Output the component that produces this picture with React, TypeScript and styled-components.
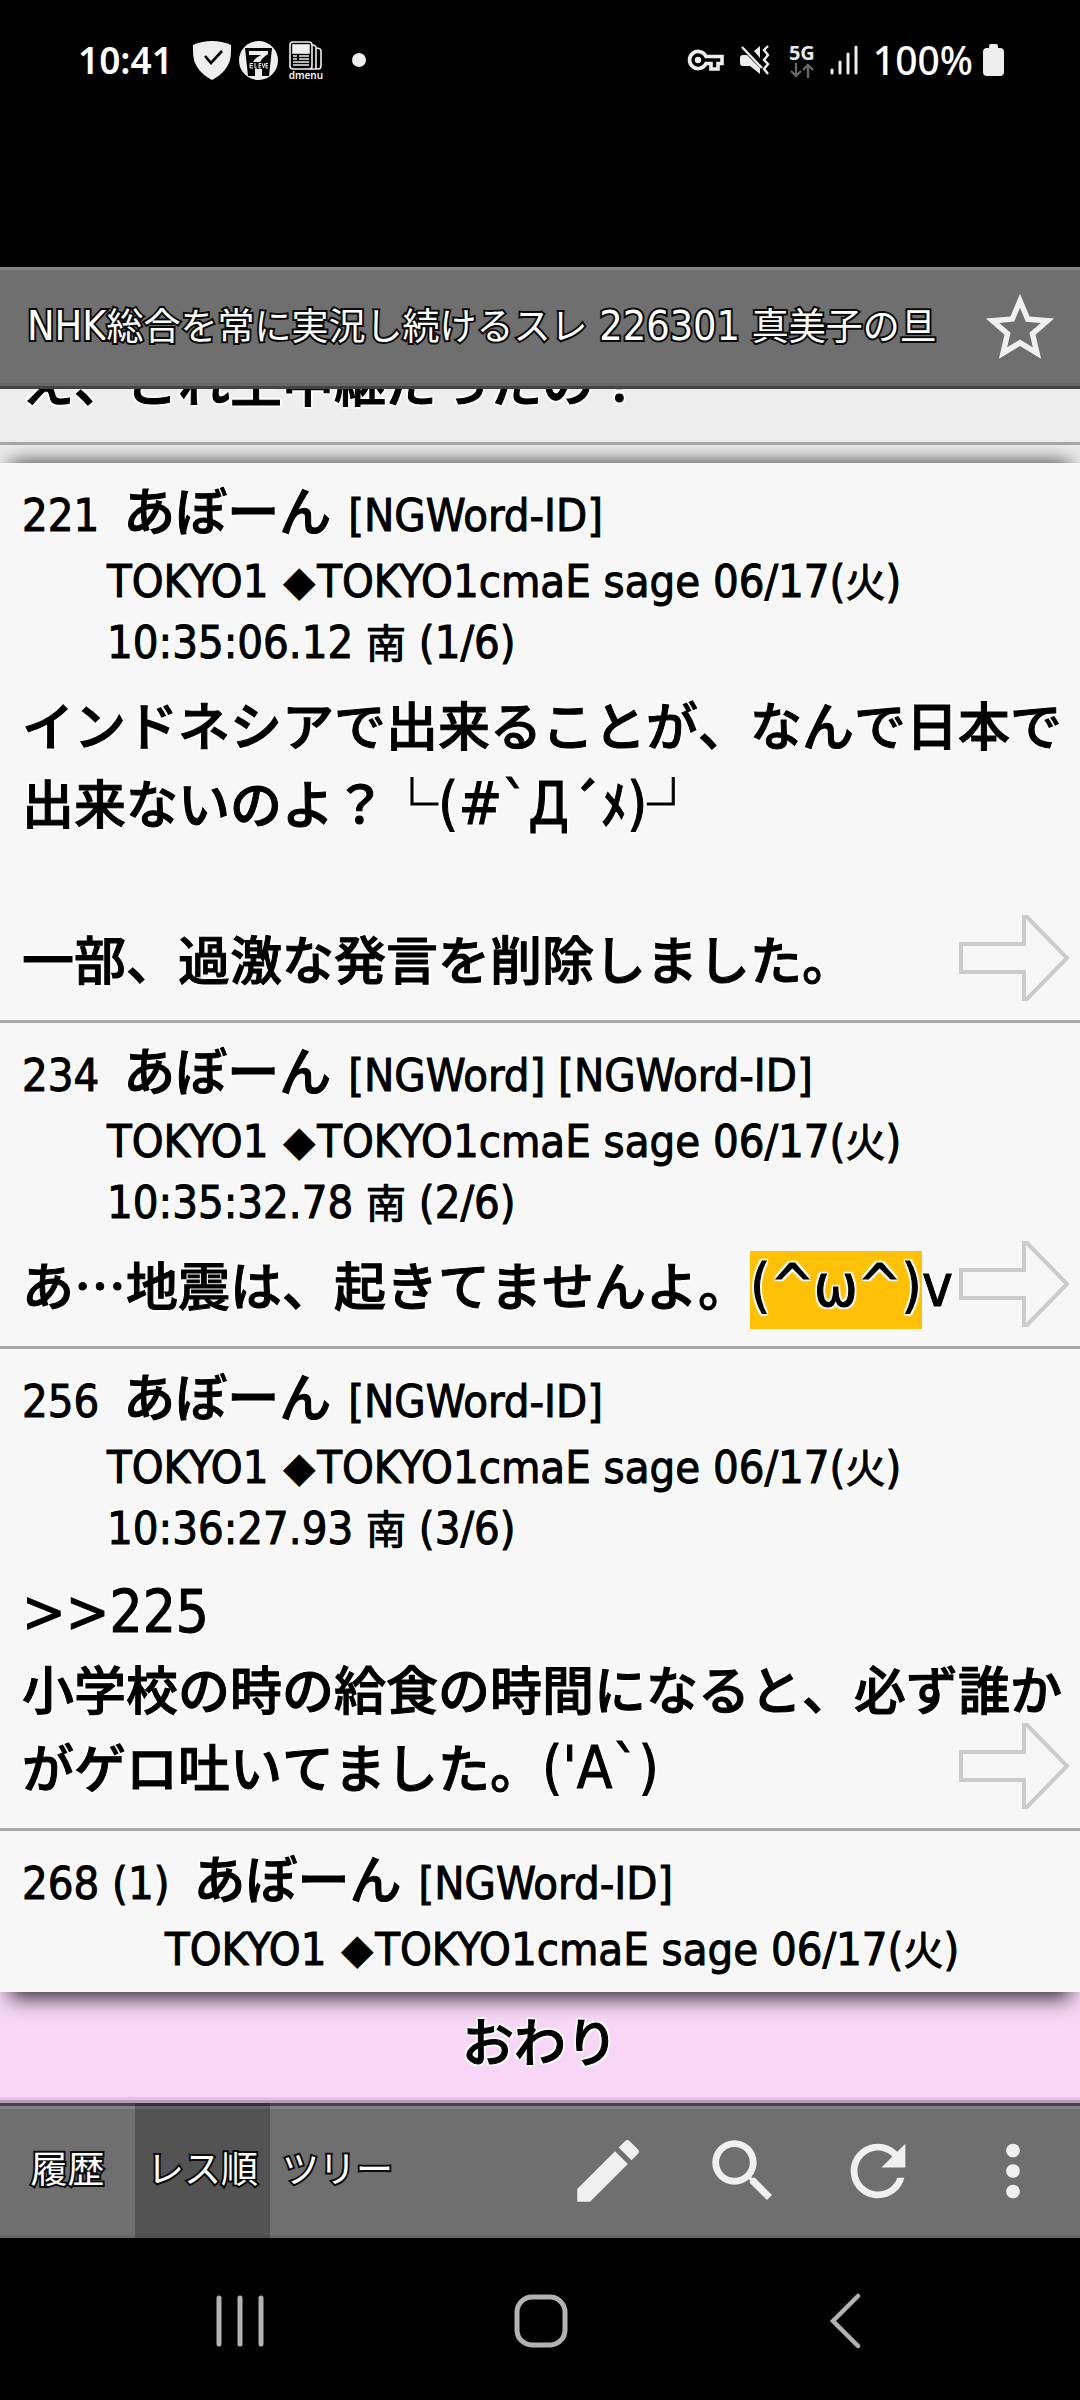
import React from 'react';
import styled, { createGlobalStyle } from 'styled-components';

const JP = '"Noto Sans CJK JP", sans-serif';
const LATIN = '"DejaVu Sans Condensed", "DejaVu Sans", "Noto Sans CJK JP", sans-serif';
const SYSTEM = '"Noto Sans", Roboto, sans-serif';

const GlobalStyle = createGlobalStyle`
  *, *::before, *::after { box-sizing: border-box; }
  body { margin: 0; background: #000; }
  button { border: 0; padding: 0; margin: 0; background: none; color: inherit; font: inherit; }
  h1, h2, p, ol { margin: 0; padding: 0; font-weight: inherit; }
  ol { list-style: none; }
  svg { display: block; flex: none; }
`;

const Screen = styled.div`
  min-height: 100vh;
  display: flex;
  flex-direction: column;
  background: #000;
  font-family: ${JP};
`;

/* ---------- status bar ---------- */

const StatusBar = styled.div`
  height: 267px;
  padding: 32px 76px 0 78px;
  display: flex;
  align-items: flex-start;
  justify-content: space-between;
  color: #fff;
  font-family: ${SYSTEM};
`;

const StatusGroup = styled.div<{ $gap: number }>`
  height: 56px;
  display: flex;
  align-items: center;
  gap: ${(p) => p.$gap}px;
`;

const StatusText = styled.span`
  font-size: 37px;
  line-height: 56px;
  font-weight: 600;
`;

const Charge = styled(StatusText)`
  font-size: 39px;
  font-weight: 500;
`;

const StatusIcons = styled.div`
  display: flex;
  align-items: center;
  gap: 8px;
  margin-left: 8px;
`;

const MenuApp = styled.div`
  width: 40px;
  display: flex;
  flex-direction: column;
  align-items: center;
  font-size: 10px;
  line-height: 10px;
  font-weight: 600;
  color: #f0f0f0;
`;

const Dot = styled.span`
  width: 14px;
  height: 14px;
  margin-left: 18px;
  border-radius: 50%;
  background: #eee;
`;

const Network = styled.div`
  display: flex;
  flex-direction: column;
  align-items: center;
  font-size: 20px;
  line-height: 20px;
  font-weight: 700;
  color: #e8e8e8;
`;

/* ---------- thread header ---------- */

const Header = styled.header`
  height: 122px;
  display: flex;
  align-items: center;
  background: #6f6f6f;
  border-top: 3px solid #828282;
  border-bottom: 3px solid #434343;
  box-shadow: inset 0 -3px 0 #686868;
`;

const outlined = `
  color: #fff;
  -webkit-text-stroke: 4px #0c0c0c;
  paint-order: stroke fill;
`;

const halo = [
  [-2, 0], [2, 0], [0, -2], [0, 2], [-2, -2], [2, -2], [-2, 2], [2, 2],
]
  .map(([x, y]) => `${x}px ${y}px 1px #fcfcfc`)
  .join(', ');

const Title = styled.h1`
  flex: 1;
  padding: 0 0 8px 27px;
  font-size: 37px;
  line-height: 56px;
  white-space: nowrap;
  ${outlined}
`;

const StarButton = styled.button`
  width: 120px;
  height: 116px;
  display: flex;
  align-items: center;
  justify-content: center;
`;

/* ---------- posts ---------- */

const Main = styled.main`
  flex: 1;
  display: flex;
  flex-direction: column;
  background: #eee;
  color: #000;
  text-shadow: ${halo};
  -webkit-text-stroke: 1px #000;
`;

const PreviousPost = styled.div`
  height: 56px;
  padding: 0 12px 23px 22px;
  border-bottom: 3px solid #a8a8a8;
`;

const PreviousClip = styled.div`
  height: 30px;
  display: flex;
  align-items: flex-end;
  overflow: hidden;
`;

const BodyText = styled.p`
  font-size: 52px;
  line-height: 78px;
  font-weight: 500;
  font-kerning: none;
`;

const Popup = styled.section`
  flex: 1;
  position: relative;
  margin-top: 18px;
  background: #f7f7f7;
  box-shadow:
    0 -10px 20px -10px rgba(0, 0, 0, 0.8),
    0 16px 20px -10px rgba(0, 0, 0, 0.8);
`;

const Post = styled.li`
  position: relative;
  padding: 11px 12px 23px 22px;
  border-bottom: 3px solid #a8a8a8;

  &:last-child {
    border-bottom: 0;
    padding-bottom: 0;
  }
`;

const PostHead = styled.div`
  min-height: 211px;
  font-size: 40px;
  line-height: 61px;
`;

const ShortHead = styled(PostHead)`
  min-height: 0;
`;

const PostTitle = styled.div`
  display: flex;
  align-items: baseline;
  padding-bottom: 6px;
  line-height: 70px;
`;

const PostName = styled.h2`
  margin: 0 17px 0 24px;
  font-size: 52px;
  font-weight: 500;
`;

const PostMeta = styled.div<{ $indent: number }>`
  padding-left: ${(p) => p.$indent}px;
`;

const LatinRun = styled.span<{ $size: number }>`
  font-family: ${LATIN};
  font-size: ${(p) => p.$size}px;
  font-weight: 400;
  line-height: 1;
`;

const Diamond = styled.span`
  margin: 0 2px;
  font-size: 32px;
  line-height: 1;
`;

const Highlight = styled.mark`
  display: inline-block;
  margin-bottom: -6px;
  padding-bottom: 12px;
  line-height: 66px;
  background: #ffc107;
  color: inherit;
`;

const ArrowButton = styled.button`
  position: absolute;
  right: 10px;
  bottom: 18px;
`;

const EndBar = styled.div`
  padding: 9px 0 21px;
  text-align: center;
  background: #f7d7f5;
  border-bottom: 3px solid #b99ab8;
  box-shadow: inset 0 -3px 0 #e4c0e2;
`;

/* ---------- toolbars ---------- */

const Toolbar = styled.nav`
  height: 135px;
  display: grid;
  grid-template-columns: repeat(8, 1fr);
  background: linear-gradient(
    #474147 0 3px,
    #828282 3px 6px,
    #6f6f6f 6px 132px,
    #686868 132px
  );
`;

const ToolButton = styled.button<{ $column?: number }>`
  display: flex;
  align-items: center;
  justify-content: center;
  grid-column: ${(p) => p.$column ?? 'auto'};
`;

const ViewButton = styled(ToolButton)<{ $active?: boolean }>`
  padding-bottom: 8px;
  background: ${(p) => (p.$active ? 'rgba(0, 0, 0, 0.25)' : 'none')};
  font-size: 37px;
  white-space: nowrap;
  ${outlined}
`;

const SystemNav = styled.nav`
  height: 162px;
  padding: 4px 88px 0;
  display: grid;
  grid-template-columns: repeat(3, 1fr);
`;

const SystemButton = styled.button`
  display: flex;
  align-items: center;
  justify-content: center;
`;

/* Splits a line into western, diamond and Japanese runs so each gets its own face. */
const Mixed = ({ text, size }: { text: string; size: number }) => (
  <>
    {text.split(/([ -~Дω]+|◆)/).map((run, i) => {
      if (run === '◆') return <Diamond key={i}>{run}</Diamond>;
      if (i % 2)
        return (
          <LatinRun key={i} $size={size}>
            {run}
          </LatinRun>
        );
      return run;
    })}
  </>
);

const ToolIcon = ({ d }: { d: string }) => (
  <svg width="82" height="82" viewBox="0 0 24 24" fill="#f0f0f0" aria-hidden="true">
    <path d={d} />
  </svg>
);

const ICONS = {
  star: 'M22 9.24l-7.19-.62L12 2 9.19 8.63 2 9.24l5.46 4.73L5.82 21 12 17.27 18.18 21l-1.63-7.03L22 9.24zM12 15.4l-3.76 2.27 1-4.28-3.32-2.88 4.38-.38L12 6.1l1.71 4.04 4.38.38-3.32 2.88 1 4.28L12 15.4z',
  edit: 'M3 17.25V21h3.75L17.81 9.94l-3.75-3.75L3 17.25zM20.71 7.04a.996.996 0 0 0 0-1.41l-2.34-2.34a.996.996 0 0 0-1.41 0l-1.83 1.83 3.75 3.75 1.83-1.83z',
  search:
    'M15.5 14h-.79l-.28-.27A6.471 6.471 0 0 0 16 9.5 6.5 6.5 0 1 0 9.5 16c1.61 0 3.09-.59 4.23-1.57l.27.28v.79l5 4.99L20.49 19l-4.99-5zm-6 0C7.01 14 5 11.99 5 9.5S7.01 5 9.5 5 14 7.01 14 9.5 11.99 14 9.5 14z',
  refresh:
    'M17.65 6.35A7.958 7.958 0 0 0 12 4c-4.42 0-7.99 3.58-7.99 8s3.57 8 7.99 8c3.73 0 6.84-2.55 7.73-6h-2.08A5.99 5.99 0 0 1 12 18c-3.31 0-6-2.69-6-6s2.69-6 6-6c1.66 0 3.14.69 4.22 1.78L13 11h7V4l-2.35 2.35z',
  more: 'M12 8c1.1 0 2-.9 2-2s-.9-2-2-2-2 .9-2 2 .9 2 2 2zm0 2c-1.1 0-2 .9-2 2s.9 2 2 2 2-.9 2-2-.9-2-2-2zm0 6c-1.1 0-2 .9-2 2s.9 2 2 2 2-.9 2-2-.9-2-2-2z',
};

const Arrow = () => (
  <svg width="112" height="88" viewBox="0 0 112 88" fill="none" stroke="#cbcbcb" strokeWidth="4" aria-hidden="true">
    <path d="M3 30H66V3H69L109 44L69 85H66V58H3Z" />
  </svg>
);

type PostData = {
  no: string;
  tags: string;
  indent: number;
  meta: string[];
  body: React.ReactNode[];
};

const line = (text: string) => <Mixed text={text} size={58} />;

const POSTS: PostData[] = [
  {
    no: '221',
    tags: '[NGWord-ID]',
    indent: 85,
    meta: ['TOKYO1 ◆TOKYO1cmaE sage 06/17(火)', '10:35:06.12 南 (1/6)'],
    body: [
      line('インドネシアで出来ることが、なんで日本で出来ないのよ？└(#`Д´ﾒ)┘'),
      '\u00a0',
      '一部、過激な発言を削除しました。',
    ],
  },
  {
    no: '234',
    tags: '[NGWord] [NGWord-ID]',
    indent: 85,
    meta: ['TOKYO1 ◆TOKYO1cmaE sage 06/17(火)', '10:35:32.78 南 (2/6)'],
    body: [
      <>
        あ…地震は、起きてませんよ。<Highlight>{line('(^ω^)')}</Highlight>
        {line('v')}
      </>,
    ],
  },
  {
    no: '256',
    tags: '[NGWord-ID]',
    indent: 85,
    meta: ['TOKYO1 ◆TOKYO1cmaE sage 06/17(火)', '10:36:27.93 南 (3/6)'],
    body: [
      line('>>225'),
      line("小学校の時の給食の時間になると、必ず誰かがゲロ吐いてました。('A`)"),
    ],
  },
  {
    no: '268 (1)',
    tags: '[NGWord-ID]',
    indent: 143,
    meta: ['TOKYO1 ◆TOKYO1cmaE sage 06/17(火)'],
    body: [],
  },
];

const PopupPost = ({ post }: { post: PostData }) => {
  const Head = post.body.length ? PostHead : ShortHead;
  return (
    <Post>
      <Head>
        <PostTitle>
          <LatinRun $size={45}>{post.no}</LatinRun>
          <PostName>あぼーん</PostName>
          <LatinRun $size={45}>{post.tags}</LatinRun>
        </PostTitle>
        {post.meta.map((m) => (
          <PostMeta key={m} $indent={post.indent}>
            <Mixed text={m} size={45} />
          </PostMeta>
        ))}
      </Head>
      {post.body.map((b, i) => (
        <BodyText key={i}>{b}</BodyText>
      ))}
      {post.body.length > 0 && (
        <ArrowButton aria-label="返信">
          <Arrow />
        </ArrowButton>
      )}
    </Post>
  );
};

export default function App() {
  return (
    <Screen>
      <GlobalStyle />
      <StatusBar>
        <StatusGroup $gap={12}>
          <StatusText>10:41</StatusText>
          <StatusIcons>
            <svg width="38" height="39" viewBox="0 0 38 39" aria-hidden="true">
              <path d="M0 4Q9 0 19 0T38 4V11Q38 29 19 39Q0 29 0 11Z" fill="#eee" />
              <path d="M12 15L18 22L29 10" fill="none" stroke="#000" strokeWidth="2.6" />
            </svg>
            <svg width="39" height="39" viewBox="0 0 39 39" aria-hidden="true">
              <circle cx="19.500" cy="19.500" r="19.500" fill="#eee" />
              <path d="M6 7H33L30 35H9Z" fill="#000" />
              <path d="M10 10H29V13Q23 17 21 21H14Q16 17 22 14H10Z" fill="#eee" />
              <path d="M16 28H23V35H16Z" fill="#eee" />
              <path
                d="M14 22.500H11V27H14M11 24.700H14M16 22V27H18M22 22.500H20V27H22M20 24.700H22M23 22L24.500 27L26 22M29 22.500H27V27H29M27 24.700H29"
                fill="none"
                stroke="#eee"
                strokeWidth="1"
              />
            </svg>
            <MenuApp>
              <svg width="34" height="29" viewBox="0 0 34 29" fill="none" stroke="#eee" strokeWidth="1.600" aria-hidden="true">
                <rect x="1" y="1" width="22" height="27" rx="3" />
                <path d="M23 4Q27 4 27 7V28H21M27 7Q32 7 32 10V25Q32 28 29 28H25" />
                <rect x="4" y="4" width="16" height="8" fill="#eee" />
                <path d="M4 15H8M10 15H20M4 18H8M10 18H20M4 21H20M4 24H20" strokeWidth="1.500" />
              </svg>
              dmenu
            </MenuApp>
            <Dot />
          </StatusIcons>
        </StatusGroup>
        <StatusGroup $gap={15}>
          <svg width="38" height="24" viewBox="0 0 38 24" fill="none" stroke="#eee" strokeWidth="3.600" aria-hidden="true">
            <path d="M19 8.500A8.600 8.600 0 1 0 19 15.500H24V21H31V15.500H35V8.500Z" />
            <circle cx="11" cy="12" r="3.200" fill="#eee" stroke="none" />
          </svg>
          <svg width="34" height="30" viewBox="0 0 34 30" aria-hidden="true">
            <path d="M14 6L20 1V13ZM0 13Q0 10 3 10H7L20 23V29L10 21H3Q0 21 0 18Z" fill="#eee" />
            <path d="M2 2L22 23" stroke="#eee" strokeWidth="2.400" />
            <path d="M28 1L24 5L28 10L24 15L28 19L24 24L28 29" fill="none" stroke="#eee" strokeWidth="2.400" />
          </svg>
          <Network>
            5G
            <svg width="24" height="15" viewBox="0 0 24 15" fill="none" stroke="#666" strokeWidth="2.400" aria-hidden="true">
              <path d="M6 0V13M1 8L6 13L11 8M18 15V2M13 7L18 2L23 7" />
            </svg>
          </Network>
          <svg width="28" height="30" viewBox="0 0 28 30" stroke="#eee" strokeLinecap="round" strokeWidth="3" aria-hidden="true">
            <path d="M2 25V28M10 17V28M18 9V28M26 2V28" />
          </svg>
          <StatusGroup $gap={10}>
            <Charge>100%</Charge>
            <svg width="21" height="32" viewBox="0 0 21 32" fill="#eee" aria-hidden="true">
              <path d="M6 2Q6 0 8 0H13Q15 0 15 2V4H17Q21 4 21 8V28Q21 32 17 32H4Q0 32 0 28V8Q0 4 4 4H6Z" />
            </svg>
          </StatusGroup>
        </StatusGroup>
      </StatusBar>

      <Header>
        <Title>
          <Mixed text="NHK総合を常に実況し続けるスレ 226301 真美子の旦" size={41} />
        </Title>
        <StarButton aria-label="お気に入り">
          <ToolIcon d={ICONS.star} />
        </StarButton>
      </Header>

      <Main>
        <PreviousPost>
          <PreviousClip>
            <BodyText>え、これ生中継だったの？</BodyText>
          </PreviousClip>
        </PreviousPost>
        <Popup>
          <ol>
            {POSTS.map((post) => (
              <PopupPost key={post.no} post={post} />
            ))}
          </ol>
        </Popup>
        <EndBar>
          <BodyText>おわり</BodyText>
        </EndBar>
      </Main>

      <Toolbar>
        <ViewButton>履歴</ViewButton>
        <ViewButton $active>レス順</ViewButton>
        <ViewButton>ツリー</ViewButton>
        <ToolButton $column={5} aria-label="書き込み">
          <ToolIcon d={ICONS.edit} />
        </ToolButton>
        <ToolButton aria-label="検索">
          <ToolIcon d={ICONS.search} />
        </ToolButton>
        <ToolButton aria-label="更新">
          <ToolIcon d={ICONS.refresh} />
        </ToolButton>
        <ToolButton aria-label="メニュー">
          <ToolIcon d={ICONS.more} />
        </ToolButton>
      </Toolbar>

      <SystemNav>
        <SystemButton aria-label="履歴">
          <svg width="56" height="56" viewBox="0 0 56 56" stroke="#b2b2b2" strokeWidth="5" strokeLinecap="round" aria-hidden="true">
            <path d="M8 5V51M29 5V51M50 5V51" />
          </svg>
        </SystemButton>
        <SystemButton aria-label="ホーム">
          <svg width="56" height="56" viewBox="0 0 56 56" fill="none" stroke="#b2b2b2" strokeWidth="5" aria-hidden="true">
            <rect x="5" y="4" width="48" height="48" rx="15" />
          </svg>
        </SystemButton>
        <SystemButton aria-label="戻る">
          <svg width="56" height="56" viewBox="0 0 56 56" fill="none" stroke="#b2b2b2" strokeWidth="4.500" strokeLinecap="round" aria-hidden="true">
            <path d="M45 3L20 28L45 53" />
          </svg>
        </SystemButton>
      </SystemNav>
    </Screen>
  );
}
